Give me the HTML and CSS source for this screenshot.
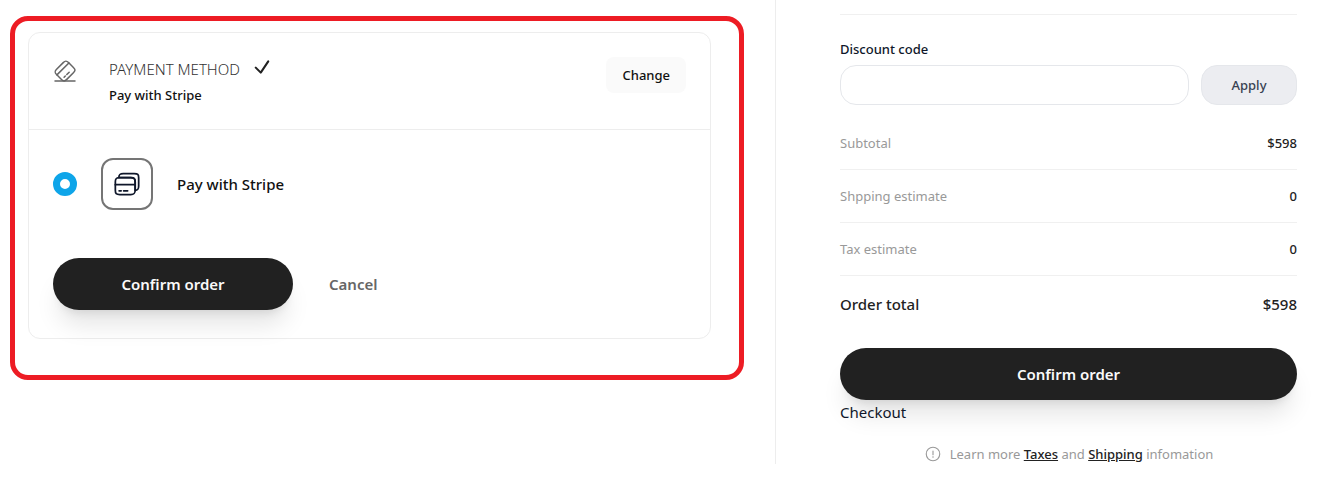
FILE: index.html
```html
<!DOCTYPE html>
<html lang="en">
<head>
<meta charset="utf-8">
<meta name="viewport" content="width=device-width, initial-scale=1">
<title>Checkout</title>
<link rel="stylesheet" href="styles.css">
</head>
<body>
<div class="checkout">
  <main class="checkout-main">
    <div class="highlight">
      <section class="card">
        <header class="card-header">
          <svg class="header-icon" width="24" height="24" viewBox="0 0 24 24" fill="none" stroke="currentColor" stroke-width="1.5" stroke-linecap="round" stroke-linejoin="round" aria-hidden="true">
            <path d="M3.930 15.880L15.880 3.930"/>
            <path d="M11.100 18.280L12.300 17.080"/>
            <path d="M13.790 15.590L16.180 13.200"/>
            <path d="M3.600 10.240L10.240 3.600C12.360 1.480 13.420 1.470 15.520 3.570L20.430 8.480C22.530 10.580 22.520 11.640 20.400 13.760L13.760 20.400C11.640 22.520 10.580 22.530 8.480 20.430L3.570 15.520C1.470 13.420 1.470 12.370 3.600 10.240Z"/>
            <path d="M2 22H22"/>
          </svg>
          <div class="header-text">
            <h3 class="header-title">
              <span>PAYMENT METHOD</span>
              <svg class="check" width="20" height="20" viewBox="0 0 24 24" fill="none" stroke="currentColor" stroke-width="2.5" stroke-linecap="round" stroke-linejoin="round" aria-hidden="true">
                <path d="M4.500 12.750l6 6 9-13.500"/>
              </svg>
            </h3>
            <p class="header-value">Pay with Stripe</p>
          </div>
          <button class="btn-change" type="button">Change</button>
        </header>
        <div class="card-body">
          <label class="method">
            <input class="method-radio" type="radio" name="payment-method" checked>
            <span class="method-icon">
              <svg width="28" height="28" viewBox="0 0 24 24" fill="none" stroke="currentColor" stroke-width="1.5" stroke-linecap="round" stroke-linejoin="round" aria-hidden="true">
                <path d="M2 12.610h17"/>
                <path d="M19 10.280v7.170c-.03 2.860-.81 3.550-3.780 3.550H5.780C2.760 21 2 20.250 2 17.270v-6.990c0-2.700.63-3.570 3-3.710.24-.01.500-.02.780-.02h9.440c3.020 0 3.780.750 3.780 3.730z"/>
                <path d="M22 6.730v6.990c0 2.700-.63 3.570-3 3.710v-7.150c0-2.980-.76-3.730-3.780-3.730H5.780c-.28 0-.54.010-.78.020C5.030 3.710 5.810 3 8.780 3h9.440C21.240 3 22 3.750 22 6.730z"/>
                <path d="M5.250 17.810h1.720M9.110 17.810h3.440"/>
              </svg>
            </span>
            <span class="method-label">Pay with Stripe</span>
          </label>
          <div class="actions">
            <button class="btn-primary btn-confirm" type="button">Confirm order</button>
            <button class="btn-cancel" type="button">Cancel</button>
          </div>
        </div>
      </section>
    </div>
  </main>
  <aside class="summary">
    <div class="summary-inner">
      <form class="discount">
        <label class="discount-label" for="discount-code">Discount code</label>
        <div class="discount-row">
          <input class="discount-input" id="discount-code" type="text">
          <button class="btn-apply" type="button">Apply</button>
        </div>
      </form>
      <dl class="totals">
        <div class="total-row"><dt>Subtotal</dt><dd>$598</dd></div>
        <div class="total-row"><dt>Shpping estimate</dt><dd>0</dd></div>
        <div class="total-row"><dt>Tax estimate</dt><dd>0</dd></div>
        <div class="total-row order-total"><dt>Order total</dt><dd>$598</dd></div>
      </dl>
      <button class="btn-primary" type="button">Confirm order</button>
      <p class="checkout-text">Checkout</p>
      <p class="info">
        <svg class="info-icon" width="18" height="18" viewBox="0 0 24 24" fill="none" stroke="currentColor" stroke-width="1.5" stroke-linecap="round" aria-hidden="true">
          <circle cx="12" cy="12" r="9"/>
          <path d="M12 8v5"/>
          <path d="M12 16h.01" stroke-width="2"/>
        </svg>
        <span>Learn more <a href="#taxes">Taxes</a> and <a href="#shipping">Shipping</a> infomation</span>
      </p>
    </div>
  </aside>
</div>
</body>
</html>
```
FILE: styles.css
```css
* {
  box-sizing: border-box;
}

body,
h3,
p,
dl,
dd {
  margin: 0;
}

body {
  background: #fff;
  color: #0f172a;
  font-family: "Segoe UI", "Noto Sans", "Open Sans", sans-serif;
  font-size: 16px;
  line-height: 24px;
}

button,
input {
  font-family: inherit;
}

button {
  border: 0;
  cursor: pointer;
}

.checkout {
  display: grid;
  grid-template-columns: 775fr 552fr;
}

.checkout-main {
  padding: 16px 31px 0 10px;
}

.highlight {
  padding: 11px 28px 36px 13px;
  border: 5px solid #ed1c24;
  border-radius: 18px;
}

.card {
  border: 1px solid #ededed;
  border-radius: 12px;
}

.card-header {
  display: flex;
  align-items: flex-start;
  padding: 24px;
  border-bottom: 1px solid #ededed;
}

.header-icon {
  margin-top: 2px;
  margin-right: 32px;
  color: #666;
}

.header-text {
  flex: 1;
}

.header-title {
  display: flex;
  align-items: flex-start;
  gap: 12px;
  color: #333;
  font-size: 15px;
  font-weight: 300;
  line-height: 24px;
}

.check {
  color: #222;
}

.header-value {
  margin-top: 4px;
  color: #111;
  font-size: 13px;
  font-weight: 500;
  line-height: 20px;
}

.btn-change {
  height: 36px;
  padding: 0 16px;
  border-radius: 8px;
  background: #fafafa;
  color: #111;
  font-size: 13px;
  font-weight: 500;
}

.card-body {
  padding: 28px 24px;
}

.method {
  display: flex;
  align-items: center;
  gap: 24px;
}

.method-radio {
  width: 24px;
  height: 24px;
  margin: 0;
  appearance: none;
  border: 7px solid #0ea5e9;
  border-radius: 50%;
  background: #fff;
}

.method-icon {
  display: flex;
  align-items: center;
  justify-content: center;
  width: 52px;
  height: 52px;
  border: 2px solid #757575;
  border-radius: 12px;
}

.method-label {
  color: #111;
  font-size: 15px;
  font-weight: 500;
}

.actions {
  display: flex;
  margin-top: 48px;
}

.btn-primary {
  width: 100%;
  height: 52px;
  border-radius: 26px;
  background: #212121;
  box-shadow: 0 20px 25px -5px rgba(0, 0, 0, 0.1), 0 8px 10px -6px rgba(0, 0, 0, 0.1);
  color: #fafafa;
  font-size: 15px;
  font-weight: 600;
}

.btn-confirm {
  max-width: 240px;
}

.btn-cancel {
  padding: 0 36px;
  background: transparent;
  color: #666;
  font-size: 15px;
  font-weight: 600;
}

.summary {
  padding-left: 64px;
  padding-right: 30px;
  padding-top: 14px;
  border-left: 1px solid #ededed;
}

.summary-inner {
  border-top: 1px solid #f0f0f0;
}

.discount {
  padding-top: 24px;
}

.discount-label {
  display: block;
  margin-bottom: 6px;
  font-size: 13px;
  font-weight: 500;
  line-height: 20px;
}

.discount-row {
  display: flex;
  gap: 12px;
}

.discount-input {
  flex: 1;
  min-width: 0;
  height: 40px;
  padding: 0 16px;
  border: 1px solid #e5e7eb;
  border-radius: 16px;
  background: #fff;
  font-size: 13px;
}

.btn-apply {
  width: 96px;
  height: 40px;
  border: 1px solid #e5e7eb;
  border-radius: 16px;
  background: #ecedf1;
  color: #374151;
  font-size: 13px;
  font-weight: 500;
}

.totals {
  padding: 12px 0 32px;
}

.total-row {
  display: flex;
  justify-content: space-between;
  padding: 16px 0;
  border-bottom: 1px solid #f0f0f0;
  color: #999;
  font-size: 13px;
  line-height: 20px;
}

.total-row dd {
  color: #222;
  font-weight: 500;
}

.order-total {
  padding-bottom: 0;
  border-bottom: 0;
  color: #222;
  font-size: 15px;
  font-weight: 500;
  line-height: 24px;
}

.checkout-text {
  font-size: 15px;
}

.info {
  display: flex;
  align-items: center;
  justify-content: center;
  gap: 8px;
  margin-top: 20px;
  color: #999;
  font-size: 13px;
  line-height: 20px;
}

.info a {
  color: #222;
  font-weight: 500;
}
```
